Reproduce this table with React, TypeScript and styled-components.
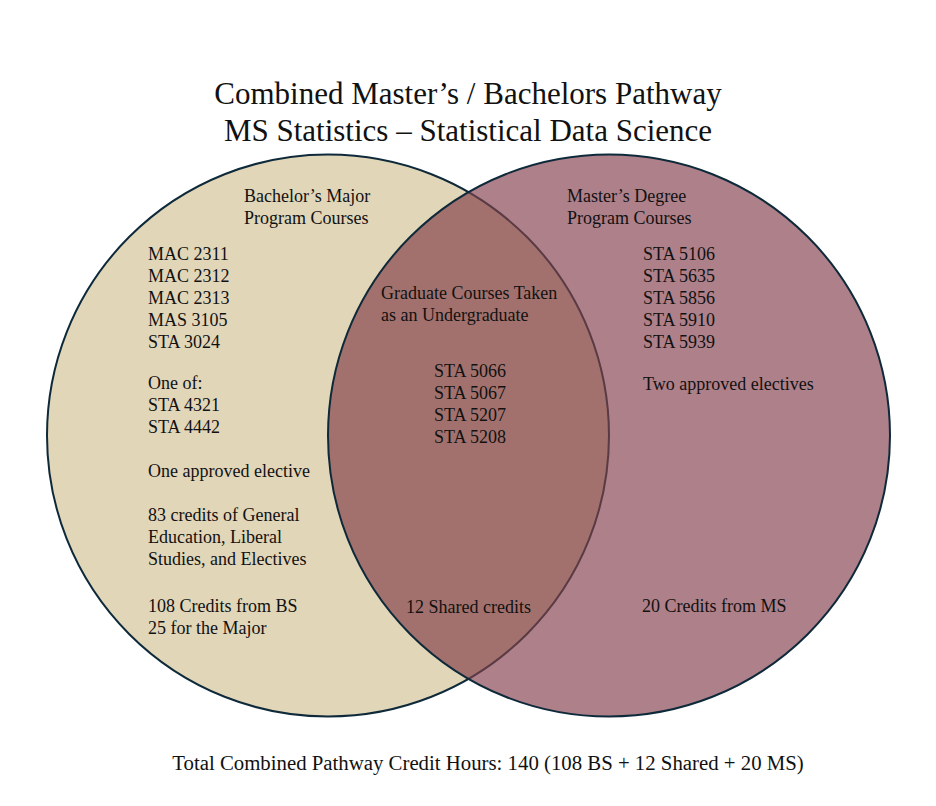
import React from 'react';
import styled, { createGlobalStyle } from 'styled-components';

const GlobalStyle = createGlobalStyle`
  html, body {
    margin: 0;
    padding: 0;
    background: #ffffff;
  }
  body {
    font-family: 'Liberation Serif', 'Times New Roman', serif;
    color: #111111;
  }
`;

const colors = {
  bachelor: '#e2d6b9',
  master: '#ae808a',
  shared: '#a2716d',
  outline: '#0e2a3a',
  hiddenOutline: '#5a3a44',
};

const Page = styled.div`
  width: 936px;
  height: 806px;
  display: flex;
  flex-direction: column;
  align-items: center;
`;

const Title = styled.h1`
  margin: 0;
  padding-top: 75px;
  font-size: 31px;
  font-weight: normal;
  line-height: 37px;
  text-align: center;
`;

const Diagram = styled.div`
  position: relative;
  width: 936px;
  height: 580px;
`;

const Drawing = styled.svg`
  position: absolute;
  left: 0;
  top: 0;
`;

const Label = styled.div<{ $x: number; $y: number }>`
  position: absolute;
  left: ${(p) => p.$x}px;
  top: ${(p) => p.$y}px;
  font-size: 18px;
  line-height: 22px;
  white-space: nowrap;
`;

const Footer = styled.p`
  margin: 22px 0 0 40px;
  font-size: 20.8px;
  line-height: 24px;
`;

// centre of the two circles inside the diagram box
const LEFT_CX = 328;
const RIGHT_CX = 609;
const CY = 286.5;
const R = 281;

const labels: { x: number; y: number; lines: string[] }[] = [
  { x: 244, y: 36, lines: ['Bachelor’s Major', 'Program Courses'] },
  { x: 148, y: 94, lines: ['MAC 2311', 'MAC 2312', 'MAC 2313', 'MAS 3105', 'STA 3024'] },
  { x: 148, y: 223, lines: ['One of:', 'STA 4321', 'STA 4442'] },
  { x: 148, y: 311, lines: ['One approved elective'] },
  { x: 148, y: 355, lines: ['83 credits of General', 'Education, Liberal', 'Studies, and Electives'] },
  { x: 148, y: 446, lines: ['108 Credits from BS', '25 for the Major'] },

  { x: 381, y: 133, lines: ['Graduate Courses Taken', 'as an Undergraduate'] },
  { x: 434, y: 211, lines: ['STA 5066', 'STA 5067', 'STA 5207', 'STA 5208'] },
  { x: 406, y: 447, lines: ['12 Shared credits'] },

  { x: 567, y: 36, lines: ['Master’s Degree', 'Program Courses'] },
  { x: 643, y: 94, lines: ['STA 5106', 'STA 5635', 'STA 5856', 'STA 5910', 'STA 5939'] },
  { x: 643, y: 224, lines: ['Two approved electives'] },
  { x: 642, y: 446, lines: ['20 Credits from MS'] },
];

function Circles() {
  return (
    <Drawing width={936} height={580} viewBox='0 0 936 580'>
      <defs>
        <clipPath id='masterArea'>
          <circle cx={RIGHT_CX} cy={CY} r={R} />
        </clipPath>
      </defs>
      <circle cx={LEFT_CX} cy={CY} r={R} fill={colors.bachelor} stroke={colors.outline} strokeWidth={2} />
      <circle cx={RIGHT_CX} cy={CY} r={R} fill={colors.master} />
      <circle cx={LEFT_CX} cy={CY} r={R} fill={colors.shared} clipPath='url(#masterArea)' />
      <circle
        cx={LEFT_CX}
        cy={CY}
        r={R}
        fill='none'
        stroke={colors.hiddenOutline}
        strokeWidth={2}
        clipPath='url(#masterArea)'
      />
      <circle cx={RIGHT_CX} cy={CY} r={R} fill='none' stroke={colors.outline} strokeWidth={2} />
    </Drawing>
  );
}

export default function App() {
  return (
    <Page>
      <GlobalStyle />
      <Title>
        Combined Master’s / Bachelors Pathway
        <br />
        MS Statistics – Statistical Data Science
      </Title>
      <Diagram>
        <Circles />
        {labels.map((l) => (
          <Label key={l.lines[0]} $x={l.x} $y={l.y}>
            {l.lines.map((line) => (
              <div key={line}>{line}</div>
            ))}
          </Label>
        ))}
      </Diagram>
      <Footer>Total Combined Pathway Credit Hours: 140 (108 BS + 12 Shared + 20 MS)</Footer>
    </Page>
  );
}
